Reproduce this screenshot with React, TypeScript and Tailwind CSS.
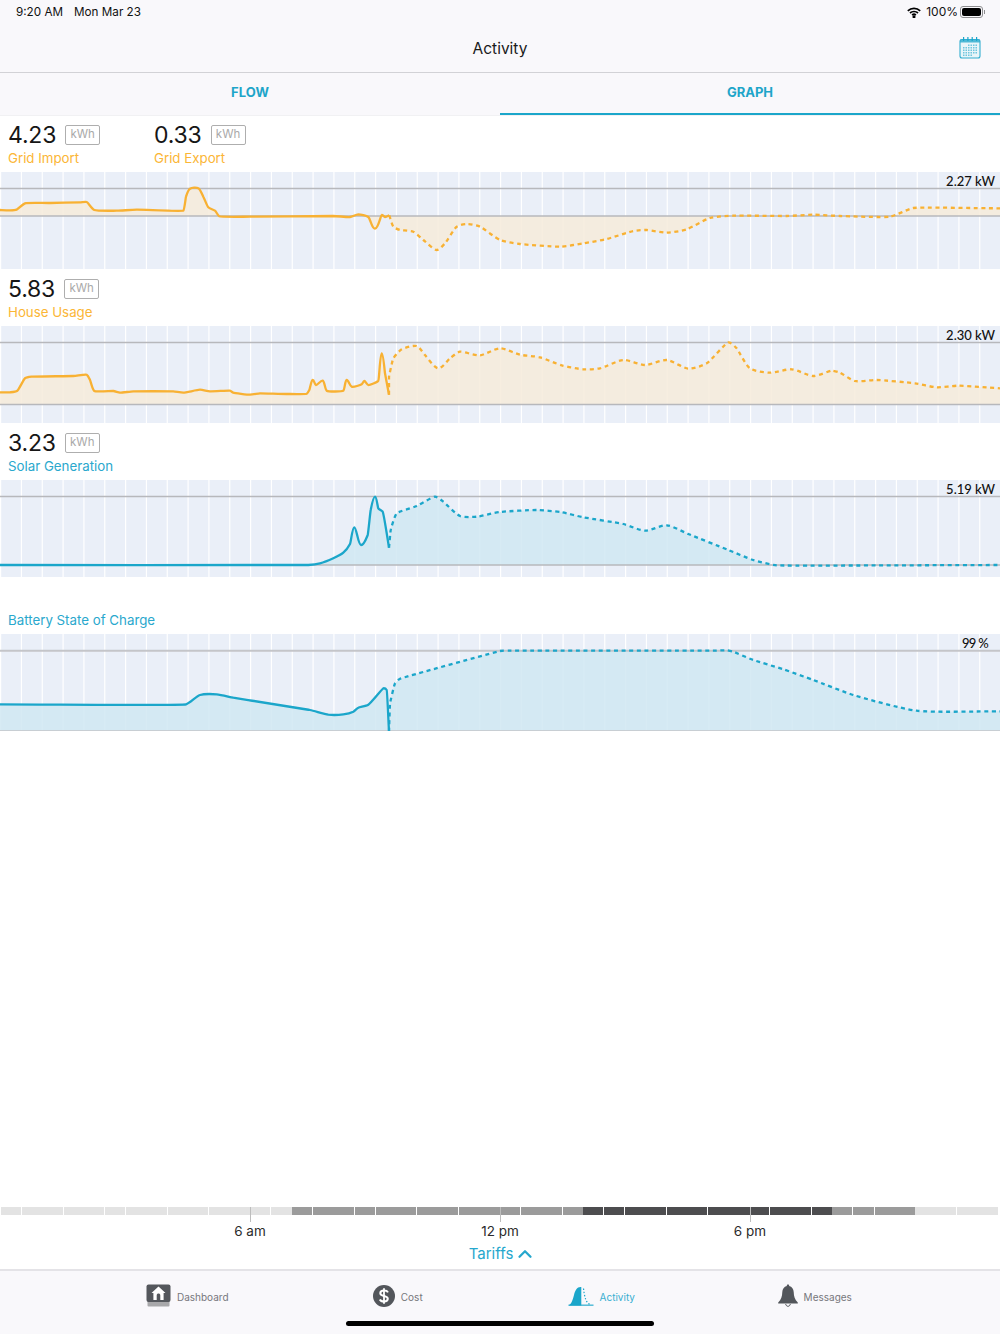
import { ChevronUp } from "lucide-react"

type Pt = [number, number]

// curve data was read off at 3x, so scale it back down to page pixels
const at = (ox: number, oy: number, list: number[][]): Pt[] =>
    list.map(([x, y]) => [ox + x / 3, oy + y / 3])

const dist = (a: Pt, b: Pt) => Math.hypot(b[0] - a[0], b[1] - a[1]) || 0.001

// tangent at b, with the handle kept short next to a short neighbour so flat runs stay flat and spikes stay sharp
const handle = (a: Pt, b: Pt, c: Pt): Pt => {
    const ab = dist(a, b)
    const bc = dist(b, c)
    const tx = (b[0] - a[0]) / ab + (c[0] - b[0]) / bc
    const ty = (b[1] - a[1]) / ab + (c[1] - b[1]) / bc
    const n = Math.hypot(tx, ty) || 1
    const dx = Math.min(ab === 0.001 ? bc : Math.abs(b[0] - a[0]), bc === 0.001 ? ab : Math.abs(c[0] - b[0]))
    const len = Math.min(Math.min(ab === 0.001 ? bc : ab, bc === 0.001 ? ab : bc) / 4, dx * 0.5)
    return [(tx / n) * len, (ty / n) * len]
}

const curve = (p: Pt[]) => {
    let d = ""
    for (let i = 0; i < p.length - 1; i++) {
        const b = p[i]
        const c = p[i + 1]
        const h1 = handle(p[Math.max(i - 1, 0)], b, c)
        const h2 = handle(b, c, p[Math.min(i + 2, p.length - 1)])
        d += `C${(b[0] + h1[0]).toFixed(1)} ${(b[1] + h1[1]).toFixed(1)} ${(c[0] - h2[0]).toFixed(1)} ${(c[1] - h2[1]).toFixed(1)} ${c[0].toFixed(1)} ${c[1].toFixed(1)}`
    }
    return d
}

const smooth = (p: Pt[]) => `M${p[0][0].toFixed(1)} ${p[0][1].toFixed(1)}${curve(p)}`

const gridX = Array.from({ length: 49 }, (_, i) => i * 20.833 + 0.6)

type ChartProps = {
    top: number
    solid: Pt[]
    dashed: Pt[]
    lines: number[]
    base: number
    label: string
    labelClass: string
    color: string
    fill: string
    lineColor?: string
    lineWidth?: number
}

function Chart({ top, solid, dashed, lines, base, label, labelClass, color, fill, lineColor = "#b7b8bc", lineWidth = 1.5 }: ChartProps) {
    const area = `${smooth(solid)}L${dashed[0][0].toFixed(1)} ${dashed[0][1].toFixed(1)}${curve(dashed)}L1000 ${base}L0 ${base}Z`
    return (
        <div className="relative h-[97px] bg-[#eaeff8]">
            <svg className="block h-[97px] w-[1000px]" viewBox={`0 ${top} 1000 97`}>
                {gridX.map((x) => (
                    <line key={x} x1={x} x2={x} y1={top} y2={top + 97} stroke="#fff" strokeWidth="1.2" />
                ))}
                <path d={area} fill={fill} fillOpacity="0.85" />
                {lines.map((y) => (
                    <line key={y} x1="0" x2="1000" y1={y} y2={y} stroke={lineColor} strokeWidth={lineWidth} />
                ))}
                <path d={smooth(solid)} fill="none" stroke={color} strokeWidth="2.3" strokeLinejoin="round" />
                <path d={smooth(dashed)} fill="none" stroke={color} strokeWidth="2.3" strokeDasharray="4 3.6" />
            </svg>
            <span className={`absolute top-[1px] font-['Lato',sans-serif] text-[13px] font-medium leading-[16px] text-[#111] ${labelClass}`}>
                {label}
            </span>
        </div>
    )
}

function Stat({ value, name, nameClass }: { value: string; name: string; nameClass: string }) {
    return (
        <div className="w-[146px]">
            <div className="flex h-[26px] items-center gap-[9px]">
                <span className="text-[23px] leading-[26px] tracking-[-0.2px] text-[#161616]">{value}</span>
                <span className="flex h-[20px] w-[35px] items-center justify-center rounded-[2px] border-[1.5px] border-[#aeaeae] text-[11.5px] text-[#a9a9a9]">
                    kWh
                </span>
            </div>
            <div className={`h-[20px] text-[13.3px] leading-[20px] ${nameClass}`}>{name}</div>
        </div>
    )
}

const amberFill = "#f6ebdb"
const blueFill = "#d0e8f2"
const amber = "#f8b133"
const blue = "#1ba6ca"

const gridSolid = at(0, 0, [[0, 630], [30, 631], [50, 629], [75, 610], [150, 609], [240, 607], [260, 606], [283, 630], [350, 632], [410, 629], [550, 632], [558, 590], [570, 566], [595, 565], [610, 590], [625, 622], [645, 632], [658, 649], [750, 650], [1000, 648], [1050, 651], [1075, 643], [1105, 651], [1125, 686], [1145, 645], [1155, 651], [1168, 646]])
const gridDashed = [
    ...at(0, 0, [[1168, 646], [1180, 680], [1200, 690], [1240, 695], [1270, 720], [1310, 750], [1335, 730], [1370, 680], [1400, 672], [1440, 680], [1500, 720]]),
    ...at(500, 0, [[60, 732], [180, 740], [250, 730], [320, 717], [400, 693], [440, 690], [500, 698], [560, 688], [630, 654], [700, 647], [860, 648], [940, 644], [1020, 648], [1170, 650], [1240, 624], [1500, 625]]),
]

const houseSolid = at(0, 270, [[0, 367], [30, 367], [52, 362], [75, 325], [95, 320], [220, 318], [260, 314], [270, 330], [283, 363], [340, 363], [360, 368], [400, 364], [520, 364], [550, 368], [600, 359], [630, 364], [690, 362], [700, 368], [750, 374], [780, 370], [860, 372], [920, 371], [928, 360], [938, 330], [948, 345], [968, 332], [980, 362], [1030, 362], [1040, 330], [1055, 350], [1085, 343], [1093, 333], [1105, 345], [1135, 332], [1145, 250], [1155, 310], [1167, 374]])
const houseDashed = [
    ...at(0, 270, [[1167, 374], [1167, 320], [1180, 265], [1205, 238], [1250, 228], [1275, 255], [1315, 295], [1350, 265], [1380, 245], [1440, 256], [1500, 235]]),
    ...at(500, 320, [[60, 104], [120, 112], [185, 136], [250, 148], [300, 145], [370, 120], [435, 135], [500, 120], [565, 146], [620, 130], [685, 67], [710, 85], [750, 145], [810, 158], [875, 148], [940, 168], [995, 152], [1020, 158], [1065, 183], [1130, 180], [1245, 190], [1310, 202], [1375, 197], [1500, 205]]),
]

const solarSolid = at(0, 270, [[0, 885], [925, 885], [960, 880], [1000, 865], [1030, 848], [1050, 822], [1063, 772], [1083, 825], [1103, 795], [1112, 720], [1125, 680], [1135, 715], [1148, 725], [1167, 833]])
const solarDashed = [
    ...at(0, 270, [[1167, 833], [1172, 780], [1190, 730], [1250, 708], [1305, 680], [1330, 695], [1380, 738], [1430, 740], [1500, 726]]),
    ...at(500, 320, [[110, 570], [185, 577], [250, 592], [370, 612], [435, 632], [500, 616], [565, 642], [685, 690], [760, 720], [830, 736], [1500, 735]]),
]

const batterySolid = at(0, 600, [[0, 313], [558, 313], [600, 285], [650, 283], [700, 293], [930, 330], [985, 344], [1030, 343], [1060, 335], [1075, 323], [1105, 314], [1150, 265], [1160, 270], [1167, 395]])
const batteryDashed = [
    ...at(0, 600, [[1167, 395], [1170, 310], [1185, 250], [1200, 236], [1500, 153]]),
    ...at(500, 600, [[30, 152], [640, 152], [680, 151], [700, 155], [760, 180], [850, 208], [940, 240], [1060, 285], [1250, 332], [1500, 334]]),
]

// [end x, tone, white gap after]
const tariff: [number, "l" | "m" | "d", boolean][] = [
    [21, "l", true], [62.5, "l", true], [104, "l", true], [125, "l", true], [166.5, "l", true], [208, "l", true], [270, "l", true], [292, "l", false],
    [312, "m", true], [353.5, "m", true], [375, "m", true], [416, "m", true], [457.5, "m", true], [520, "m", true], [561.5, "m", true], [583, "m", false],
    [603, "d", true], [624, "d", true], [665.5, "d", true], [707, "d", true], [769, "d", true], [810.5, "d", true], [832, "d", false],
    [852, "m", true], [873.5, "m", true], [915, "m", false],
    [956, "l", true], [998, "l", true],
]
const toneClass = { l: "bg-[#e3e3e3]", m: "bg-[#9b9b9b]", d: "bg-[#4d4d4f]" }

function TariffBar() {
    let prev = 1
    return (
        <div className="flex h-[8px]">
            <div className="w-[1px]" />
            {tariff.map(([end, tone, gap]) => {
                const start = prev
                prev = end + (gap ? 1 : 0)
                return <div key={start} className={`${toneClass[tone]} ${gap ? "mr-[1px]" : ""}`} style={{ width: end - start }} />
            })}
        </div>
    )
}

function Wifi() {
    return (
        <svg width="14" height="11" viewBox="0 0 14 11" fill="none" stroke="#000" strokeWidth="1.7">
            <path d="M0.8 3.8C4.3 0.5 9.7 0.5 13.2 3.8" />
            <path d="M3 6C5.2 4 8.8 4 11 6" />
            <path d="M5.1 8.1C6.2 7.1 7.8 7.1 8.9 8.1" />
            <circle cx="7" cy="9.8" r="0.7" fill="#000" />
        </svg>
    )
}

function Calendar() {
    const xs = [4, 6.5, 9, 11.5, 14, 16.5]
    const ys = [8.5, 11, 13.5, 16, 18.5]
    return (
        <svg width="22" height="23" viewBox="0 0 22 23">
            <rect x="1" y="3.5" width="20" height="18.5" rx="2" fill="#e8f5f9" stroke="#33aed0" strokeWidth="1.1" />
            <rect x="1" y="3.5" width="20" height="3" fill="#33aed0" opacity="0.85" />
            {[4, 8.3, 12.6, 17].map((x) => (
                <rect key={x} x={x} y="1" width="1.2" height="4" fill="#1ba6ca" />
            ))}
            {ys.map((y, r) =>
                xs.map((x, c) =>
                    (r === 0 && c < 2) || (r === 4 && c > 3) ? null : (
                        <rect key={`${x}-${y}`} x={x} y={y} width="1.5" height="1.5" fill="#6fc5de" />
                    ),
                ),
            )}
        </svg>
    )
}

function HomeIcon() {
    return (
        <svg width="25" height="23" viewBox="0 0 25 23">
            <rect x="1.5" y="16" width="22" height="6.5" rx="1" fill="#a8a8aa" />
            <rect x="0.5" y="0.5" width="24" height="17.5" rx="2" fill="#54575c" />
            <path d="M12.5 2.5L19.5 9H17.6V16H14.3V11.3C14.3 9 10.7 9 10.7 11.3V16H7.4V9H5.5Z" fill="#fff" />
        </svg>
    )
}

function CostIcon() {
    return (
        <svg width="22" height="22" viewBox="0 0 22 22">
            <circle cx="11" cy="11" r="11" fill="#53565b" />
            <path d="M15 7.4C14.3 6 12.8 5.5 11 5.5C8.9 5.5 7.3 6.5 7.3 8.2C7.3 10 9 10.5 11 11C13 11.5 14.8 12 14.8 13.8C14.8 15.5 13.1 16.5 11 16.5C9 16.5 7.5 15.9 6.8 14.5" fill="none" stroke="#fff" strokeWidth="2" />
            <path d="M11 3.2V18.8" stroke="#fff" strokeWidth="1.8" />
        </svg>
    )
}

function ActivityIcon() {
    return (
        <svg width="26" height="20" viewBox="0 0 26 20">
            <path d="M0.5 19.5C3.5 18 4.5 14.5 6 9C7.2 4.5 9 1 12.5 1L13.3 1V19.5Z" fill="#1ba6ca" />
            <path d="M15.5 2.5C16 7 16.8 11 18 14C19 16.5 20.5 18 22.5 18.5" fill="none" stroke="#1ba6ca" strokeWidth="1.2" strokeDasharray="1.4 1.8" />
            <rect x="0.5" y="18.6" width="25" height="1.1" fill="#1ba6ca" />
        </svg>
    )
}

function BellIcon() {
    return (
        <svg width="20" height="23" viewBox="0 0 20 23">
            <path d="M10 0.5C10.8 0.5 11.2 1 11.2 1.9C14 2.6 15.6 5 15.7 8C15.9 12.5 16.7 15.6 19.8 18.4V19.4H0.2V18.4C3.3 15.6 4.1 12.5 4.3 8C4.4 5 6 2.6 8.8 1.9C8.8 1 9.2 0.5 10 0.5Z" fill="#53565b" />
            <path d="M7.7 20C7.9 21.4 8.8 22.3 10 22.3C11.2 22.3 12.1 21.4 12.3 20" fill="none" stroke="#53565b" strokeWidth="1" />
        </svg>
    )
}

function TabItem({ icon, label, className, textClass }: { icon: React.ReactNode; label: string; className: string; textClass: string }) {
    return (
        <div className={`flex items-center justify-center gap-[6px] ${className}`}>
            {icon}
            <span className={`translate-y-[2px] text-[10px] ${textClass}`}>{label}</span>
        </div>
    )
}

export default function App() {
    return (
        <div className="flex h-[1334px] w-[1000px] flex-col overflow-hidden bg-white font-['Inter',sans-serif]">
            <header className="h-[73px] border-b border-[#d2d2d6] bg-[#f9f8fb]">
                <div className="flex h-[24px] items-center justify-between pl-[16px] pr-[15px] text-[#111]">
                    <div className="flex gap-[11px] pt-[1px] text-[11.7px]">
                        <span>9:20 AM</span>
                        <span>Mon Mar 23</span>
                    </div>
                    <div className="flex items-center text-[12px]">
                        <Wifi />
                        <span className="ml-[5px] mr-[2px]">100%</span>
                        <div className="flex items-center">
                            <div className="h-[12px] w-[23px] rounded-[3px] border border-[#8e8e90] p-[1px]">
                                <div className="h-full w-full rounded-[2px] bg-black" />
                            </div>
                            <div className="ml-[1px] h-[4px] w-[1px] bg-[#8e8e90]" />
                        </div>
                    </div>
                </div>
                <div className="relative flex h-[48px] items-center justify-center pt-[1px] text-[15.5px] text-[#1a1a1a]">
                    Activity
                    <div className="absolute right-[19px] top-[12px]">
                        <Calendar />
                    </div>
                </div>
            </header>

            <nav className="grid h-[43px] grid-cols-2 border-b border-[#f1f1f3] bg-[#f9f8fb] text-[13px] font-bold text-[#1ea5c9]">
                <div className="flex items-center justify-center border-b-2 border-transparent">FLOW</div>
                <div className="flex items-center justify-center border-b-2 border-[#1ba6ca]">GRAPH</div>
            </nav>

            <main className="flex-1">
                <div className="flex h-[56px] items-end px-2 pb-1">
                    <Stat value="4.23" name="Grid Import" nameClass="text-[#fbb636]" />
                    <Stat value="0.33" name="Grid Export" nameClass="text-[#fbb636]" />
                </div>
                <Chart top={172} solid={gridSolid} dashed={gridDashed} lines={[188.5, 216]} base={216} label="2.27 kW" labelClass="right-[5px]" color={amber} fill={amberFill} />

                <div className="flex h-[57px] items-end px-2 pb-1">
                    <Stat value="5.83" name="House Usage" nameClass="text-[#fbb636]" />
                </div>
                <Chart top={326} solid={houseSolid} dashed={houseDashed} lines={[342.5, 404.5]} base={404.5} label="2.30 kW" labelClass="right-[5px]" color={amber} fill={amberFill} />

                <div className="flex h-[57px] items-end px-2 pb-1">
                    <Stat value="3.23" name="Solar Generation" nameClass="text-[#2aa8cd]" />
                </div>
                <Chart top={480} solid={solarSolid} dashed={solarDashed} lines={[496.5, 565]} base={565} label="5.19 kW" labelClass="right-[5px]" color={blue} fill={blueFill} />

                <div className="flex h-[57px] items-end px-2 pb-1">
                    <div className="h-[20px] text-[13.3px] leading-[20px] text-[#2aa8cd]">Battery State of Charge</div>
                </div>
                <Chart top={634} solid={batterySolid} dashed={batteryDashed} lines={[650.7, 731.3]} base={731} label="99 %" labelClass="right-[12px] tracking-[-0.7px]" color={blue} fill={blueFill} lineColor="#c4c5c9" lineWidth={2} />
            </main>

            <section className="h-[63px] shrink-0">
                <TariffBar />
                <div className="grid grid-cols-3 px-[125px]">
                    {["6 am", "12 pm", "6 pm"].map((t) => (
                        <div key={t} className="flex flex-col items-center">
                            <div className="-mt-[8px] h-[15px] w-[1px] bg-[#bdbdbd]" />
                            <span className="text-[13.5px] leading-[18px] text-[#2b2b2b]">{t}</span>
                        </div>
                    ))}
                </div>
                <div className="mt-[3px] flex items-center justify-center gap-[1px] pl-[5px] text-[15px] leading-[20px] text-[#26a7cd]">
                    Tariffs
                    <ChevronUp size={22} strokeWidth={2.5} />
                </div>
            </section>

            <footer className="relative -mt-px h-[65px] shrink-0 border-t-2 border-[#e4e3e7] bg-[#f9f8fb]">
                <div className="grid grid-cols-4 px-[83px] pt-[13px]">
                    <TabItem icon={<HomeIcon />} label="Dashboard" className="" textClass="text-[#77777b]" />
                    <TabItem icon={<CostIcon />} label="Cost" className="translate-x-[2px]" textClass="text-[#77777b]" />
                    <TabItem icon={<ActivityIcon />} label="Activity" className="-translate-x-[3px]" textClass="text-[#38afd1]" />
                    <TabItem icon={<BellIcon />} label="Messages" className="translate-x-[2px]" textClass="text-[#77777b]" />
                </div>
                <div className="absolute left-[346px] top-[50px] h-[5px] w-[308px] rounded-full bg-black" />
            </footer>
        </div>
    )
}
